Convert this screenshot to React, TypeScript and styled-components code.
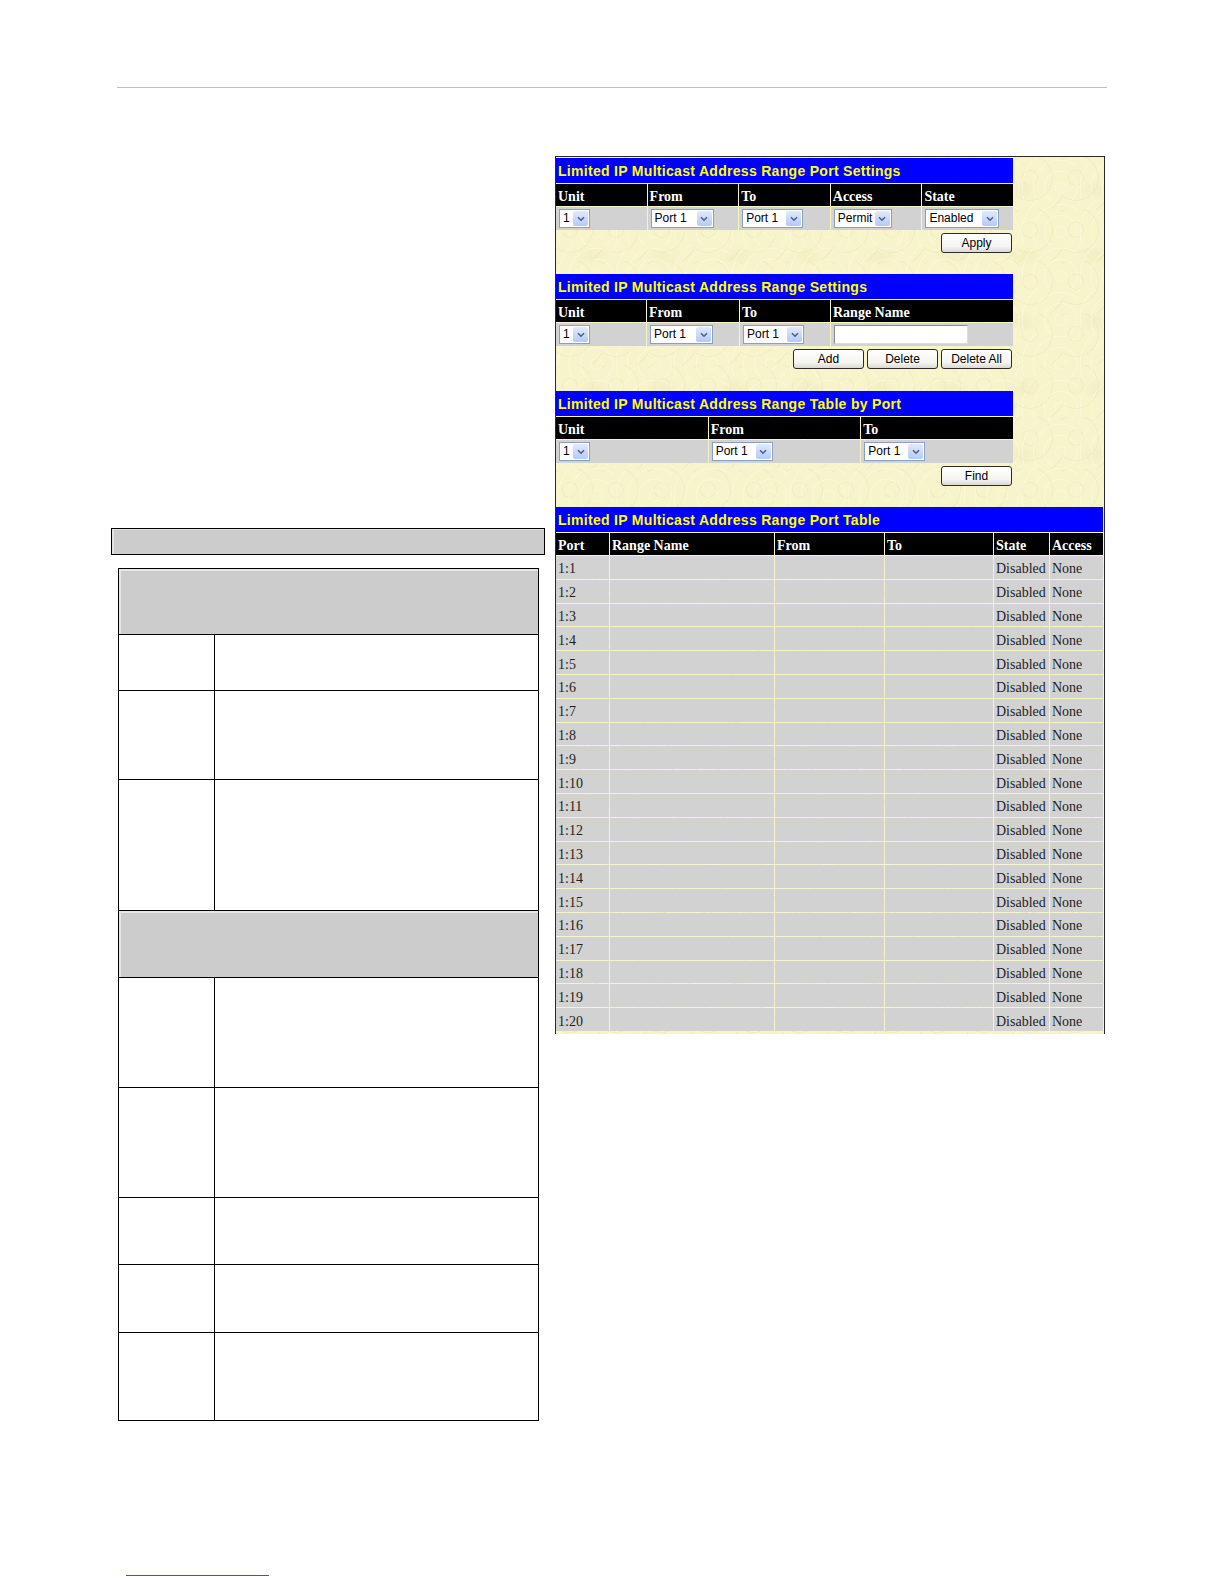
import React from "react"
import styled, { createGlobalStyle } from "styled-components"

const GlobalStyle = createGlobalStyle`
  html, body {
    margin: 0;
    padding: 0;
    background: #ffffff;
  }
  body {
    font-family: "Liberation Sans", Arial, sans-serif;
  }
`

const Page = styled.div`
  width: 1224px;
  height: 1584px;
  box-sizing: border-box;
  padding-top: 87px;
  padding-bottom: 8px;
  display: flex;
  flex-direction: column;
`

const Rule = styled.div`
  margin-left: 117px;
  width: 990px;
  height: 1px;
  background: #bdbdbd;
`

const Columns = styled.div`
  display: grid;
  grid-template-columns: 434px 550px;
  column-gap: 10px;
  margin: 68px 0 0 111px;
  align-items: start;
`

const LeftColumn = styled.div`
  display: flex;
  flex-direction: column;
`

const CaptionBar = styled.div`
  margin-top: 372px;
  height: 27px;
  box-sizing: border-box;
  border: 1.5px solid #000;
  background: #cccccc;
  box-shadow: inset 2px 1px 0 #e2e2e2;
`

const SpecTable = styled.table`
  margin: 13px 0 0 7px;
  width: 421px;
  border-collapse: collapse;
  table-layout: fixed;
  border: 1.5px solid #000;
`

const SpecCell = styled.td<{ $h: number; $shaded?: boolean }>`
  height: ${(p) => p.$h}px;
  padding: 0;
  border: 1.5px solid #000;
  background: ${(p) => (p.$shaded ? "#cccccc" : "#ffffff")};
  box-sizing: border-box;
  box-shadow: ${(p) => (p.$shaded ? "inset 2px 2px 0 #e6e6e6" : "none")};
`

const Frame = styled.div`
  border: 1px solid #2a2a2a;
  border-bottom: 0;
  height: 878px;
  box-sizing: border-box;
  background-color: #f7f3cb;
  background-image:
    repeating-radial-gradient(circle at 30% 40%, transparent 0 7px, rgba(226, 217, 160, 0.22) 7px 8px, transparent 8px 15px),
    repeating-radial-gradient(circle at 70% 70%, transparent 0 5px, rgba(255, 255, 240, 0.35) 5px 6px, transparent 6px 11px),
    radial-gradient(ellipse 26px 14px at 50% 50%, rgba(232, 224, 170, 0.25), transparent 70%);
  background-size: 46px 52px, 58px 44px, 72px 66px;
`

const Section = styled.div<{ $gap: number }>`
  margin-bottom: ${(p) => p.$gap}px;
`

const PanelTable = styled.table<{ $w: number }>`
  width: ${(p) => p.$w}px;
  margin-left: -1px;
  border-collapse: separate;
  border-spacing: 1px;
  table-layout: fixed;
`

const TitleCell = styled.td`
  height: 25px;
  padding: 1px 2px 0;
  background: #0000ff;
  color: #ffff00;
  font-family: "Liberation Sans", Arial, sans-serif;
  font-weight: bold;
  font-size: 14px;
  letter-spacing: 0.3px;
  white-space: nowrap;
  overflow: hidden;
  box-sizing: border-box;
`

const HeadCell = styled.th`
  height: 22px;
  padding: 3px 2px 0;
  background: #000000;
  color: #ffffff;
  font-family: "Liberation Serif", "Times New Roman", serif;
  font-weight: bold;
  font-size: 14px;
  text-align: left;
  white-space: nowrap;
  box-sizing: border-box;
`

const DataCell = styled.td`
  height: 23px;
  padding: 0 2px;
  background: #d2d2d2;
  color: #222222;
  font-family: "Liberation Serif", "Times New Roman", serif;
  font-size: 14px;
  white-space: nowrap;
  box-sizing: border-box;
`

const TextCell = styled(DataCell)`
  height: 22.8px;
  padding-top: 4px;
  color: #1e1e1e;
`

const ButtonRow = styled.div`
  display: flex;
  justify-content: flex-end;
  gap: 3px;
  width: 456px;
  margin-top: 2px;
`

const Button = styled.button`
  width: 71px;
  height: 20px;
  padding: 0;
  box-sizing: border-box;
  border: 1px solid #2b2b2b;
  border-radius: 3px;
  background: linear-gradient(#ffffff, #f4f4f0 70%, #dcd8cf);
  font-family: "Liberation Sans", Arial, sans-serif;
  font-size: 12px;
  color: #000;
  cursor: default;
`

const SelectBox = styled.span<{ $w: number }>`
  display: inline-flex;
  align-items: stretch;
  width: ${(p) => p.$w}px;
  height: 19px;
  box-sizing: border-box;
  border: 1px solid #8aa0bc;
  background: #ffffff;
  vertical-align: middle;
  margin-left: 1px;
`

const SelectText = styled.span`
  flex: 1;
  padding-left: 3px;
  font-family: "Liberation Sans", Arial, sans-serif;
  font-size: 12px;
  line-height: 17px;
  color: #000;
  white-space: nowrap;
  overflow: hidden;
`

const SelectArrow = styled.span`
  width: 15px;
  margin: 1px;
  border-radius: 2px;
  background: linear-gradient(#e1e9fd, #b6c9f6);
  display: flex;
  align-items: center;
  justify-content: center;
`

const TextField = styled.span`
  display: inline-block;
  width: 134px;
  height: 19px;
  box-sizing: border-box;
  vertical-align: middle;
  margin-left: 1px;
  background: #ffffff;
  border: 1px solid #8c8c8c;
  border-right-color: #dcdcdc;
  border-bottom-color: #dcdcdc;
`

const Footer = styled.div`
  margin: auto 0 0 126px;
  width: 143px;
  height: 1px;
  background: #4a4ad6;
`

const Select = ({ value, width }: { value: string; width: number }) => (
  <SelectBox $w={width}>
    <SelectText>{value}</SelectText>
    <SelectArrow>
      <svg width="8" height="6" viewBox="0 0 8 6">
        <polyline points="1,1.2 4,4.2 7,1.2" fill="none" stroke="#4d6185" strokeWidth="1.6" />
      </svg>
    </SelectArrow>
  </SelectBox>
)

const specRows = [
  { h: 66, shaded: true },
  { h: 56 },
  { h: 89 },
  { h: 131 },
  { h: 67, shaded: true },
  { h: 110 },
  { h: 110 },
  { h: 67 },
  { h: 68 },
  { h: 88 },
]

const ports = Array.from({ length: 20 }, (_, i) => `1:${i + 1}`)

export default function App() {
  return (
    <>
      <GlobalStyle />
      <Page>
        <Rule />
        <Columns>
          <LeftColumn>
            <CaptionBar />
            <SpecTable>
              <colgroup>
                <col style={{ width: 96 }} />
                <col />
              </colgroup>
              <tbody>
                {specRows.map((row, i) =>
                  row.shaded ? (
                    <tr key={i}>
                      <SpecCell $h={row.h} $shaded colSpan={2} />
                    </tr>
                  ) : (
                    <tr key={i}>
                      <SpecCell $h={row.h} />
                      <SpecCell $h={row.h} />
                    </tr>
                  )
                )}
              </tbody>
            </SpecTable>
          </LeftColumn>

          <Frame>
            <Section $gap={20}>
              <PanelTable $w={459}>
                <tbody>
                  <tr>
                    <TitleCell colSpan={5}>Limited IP Multicast Address Range Port Settings</TitleCell>
                  </tr>
                  <tr>
                    <HeadCell>Unit</HeadCell>
                    <HeadCell>From</HeadCell>
                    <HeadCell>To</HeadCell>
                    <HeadCell>Access</HeadCell>
                    <HeadCell>State</HeadCell>
                  </tr>
                  <tr>
                    <DataCell><Select value="1" width={31} /></DataCell>
                    <DataCell><Select value="Port 1" width={63} /></DataCell>
                    <DataCell><Select value="Port 1" width={61} /></DataCell>
                    <DataCell><Select value="Permit" width={58} /></DataCell>
                    <DataCell><Select value="Enabled" width={74} /></DataCell>
                  </tr>
                </tbody>
              </PanelTable>
              <ButtonRow>
                <Button>Apply</Button>
              </ButtonRow>
            </Section>

            <Section $gap={21}>
              <PanelTable $w={459}>
                <colgroup>
                  <col style={{ width: 90 }} />
                  <col style={{ width: 92 }} />
                  <col style={{ width: 90 }} />
                  <col />
                </colgroup>
                <tbody>
                  <tr>
                    <TitleCell colSpan={4}>Limited IP Multicast Address Range Settings</TitleCell>
                  </tr>
                  <tr>
                    <HeadCell>Unit</HeadCell>
                    <HeadCell>From</HeadCell>
                    <HeadCell>To</HeadCell>
                    <HeadCell>Range Name</HeadCell>
                  </tr>
                  <tr>
                    <DataCell><Select value="1" width={31} /></DataCell>
                    <DataCell><Select value="Port 1" width={63} /></DataCell>
                    <DataCell><Select value="Port 1" width={61} /></DataCell>
                    <DataCell><TextField /></DataCell>
                  </tr>
                </tbody>
              </PanelTable>
              <ButtonRow>
                <Button>Add</Button>
                <Button>Delete</Button>
                <Button>Delete All</Button>
              </ButtonRow>
            </Section>

            <Section $gap={20}>
              <PanelTable $w={459}>
                <tbody>
                  <tr>
                    <TitleCell colSpan={3}>Limited IP Multicast Address Range Table by Port</TitleCell>
                  </tr>
                  <tr>
                    <HeadCell>Unit</HeadCell>
                    <HeadCell>From</HeadCell>
                    <HeadCell>To</HeadCell>
                  </tr>
                  <tr>
                    <DataCell><Select value="1" width={31} /></DataCell>
                    <DataCell><Select value="Port 1" width={61} /></DataCell>
                    <DataCell><Select value="Port 1" width={61} /></DataCell>
                  </tr>
                </tbody>
              </PanelTable>
              <ButtonRow>
                <Button>Find</Button>
              </ButtonRow>
            </Section>

            <PanelTable $w={549}>
              <colgroup>
                <col style={{ width: 53 }} />
                <col style={{ width: 164 }} />
                <col style={{ width: 109 }} />
                <col style={{ width: 108 }} />
                <col style={{ width: 55 }} />
                <col />
              </colgroup>
              <tbody>
                <tr>
                  <TitleCell colSpan={6}>Limited IP Multicast Address Range Port Table</TitleCell>
                </tr>
                <tr>
                  <HeadCell>Port</HeadCell>
                  <HeadCell>Range Name</HeadCell>
                  <HeadCell>From</HeadCell>
                  <HeadCell>To</HeadCell>
                  <HeadCell>State</HeadCell>
                  <HeadCell>Access</HeadCell>
                </tr>
                {ports.map((port) => (
                  <tr key={port}>
                    <TextCell>{port}</TextCell>
                    <TextCell />
                    <TextCell />
                    <TextCell />
                    <TextCell>Disabled</TextCell>
                    <TextCell>None</TextCell>
                  </tr>
                ))}
              </tbody>
            </PanelTable>
          </Frame>
        </Columns>
        <Footer />
      </Page>
    </>
  )
}
